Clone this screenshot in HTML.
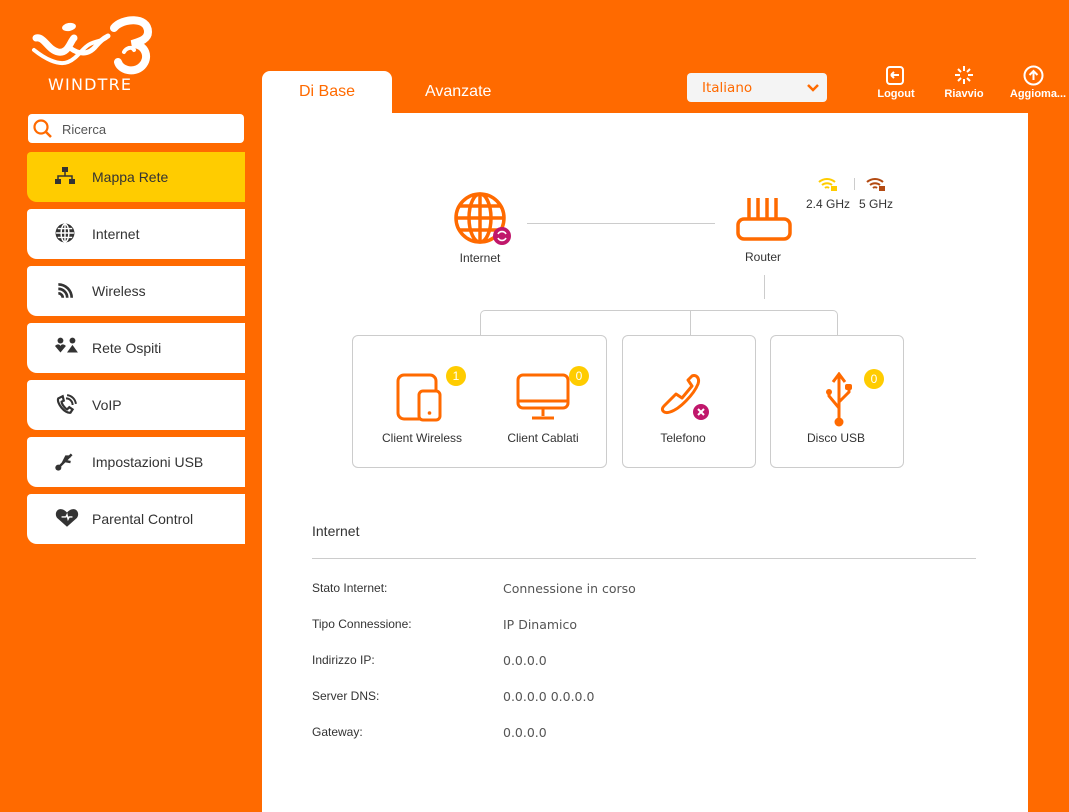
<!DOCTYPE html>
<html><head><meta charset="utf-8"><style>
*{box-sizing:border-box;margin:0;padding:0}
body{width:1069px;height:812px;background:#ff6a00;font-family:"Liberation Sans",Arial,sans-serif;position:relative;overflow:hidden}
.abs{position:absolute}
.menu{position:absolute;left:27px;width:218px;height:50px;background:#fff;border-radius:4px 0 0 10px;font-size:14px;color:#333}
.menu span{position:absolute;left:65px;top:17px}
.menu svg{position:absolute;left:28px;top:14px}
.lbl{position:absolute;font-size:12px;color:#333}
.val{position:absolute;font-family:"DejaVu Sans",Verdana,sans-serif;font-size:12.5px;color:#555}
.box{position:absolute;border:1px solid #ccc;border-radius:6px;top:335px;height:133px;background:#fff}
.badge{position:absolute;width:20px;height:20px;border-radius:10px;background:#ffcc00;color:#fff;font-size:12px;text-align:center;line-height:20px}
.cap{position:absolute;font-size:12px;color:#333;text-align:center}
.ln{position:absolute background:#ccc}
.ln{position:absolute;background:#ccc}
.tb{position:absolute;color:#fff;font-size:11px;font-weight:bold;text-align:center;width:60px}
</style></head><body>
<!-- logo -->
<svg class="abs" style="left:30px;top:16px" width="126" height="60" viewBox="0 0 126 60">
<ellipse cx="39" cy="11" rx="7" ry="4" fill="#fff" transform="rotate(-10 39 11)"/>
<path d="M6 22c8-2 12 12 22 14 10 2 12-10 16-14" stroke="#fff" stroke-width="7" fill="none" stroke-linecap="round"/>
<path d="M4 34c10 8 24 16 34 12 10-4 14-14 22-18 6-3 12-3 16-6" stroke="#fff" stroke-width="4" fill="none" stroke-linecap="round"/>
<path d="M40 32c8 6 18 8 26-2 4-5 8-8 12-10" stroke="#fff" stroke-width="5" fill="none" stroke-linecap="round"/>
<path d="M84 12c8-10 34-12 34 4 0 8-10 10-16 12 14 0 18 14 10 22-8 8-22 4-24-4" stroke="#fff" stroke-width="8" fill="none" stroke-linecap="round"/>
<path d="M94 36c2-4 8-6 10-2" stroke="#fff" stroke-width="4" fill="none" stroke-linecap="round"/>
</svg>
<div class="abs" style="left:48px;top:75px;color:#fff;font-size:16px;letter-spacing:1.2px;font-family:'DejaVu Sans',sans-serif">WINDTRE</div>
<!-- search -->
<div class="abs" style="left:28px;top:114px;width:216px;height:29px;background:#fff;border-radius:4px"></div>
<svg class="abs" style="left:33px;top:119px" width="22" height="20"><circle cx="8" cy="8" r="6.5" stroke="#ff6a00" stroke-width="2.2" fill="none"/><path d="M13 13l5 5" stroke="#ff6a00" stroke-width="2.5"/></svg>
<div class="abs" style="left:62px;top:122px;font-size:13px;color:#555">Ricerca</div>
<!-- menu -->
<div class="menu" style="top:152px;background:#ffcc00"><svg width="20" height="20" viewBox="0 0 20 18"><rect x="7" y="0" width="6" height="5" fill="#333"/><rect x="0" y="12" width="6" height="5" fill="#333"/><rect x="14" y="12" width="6" height="5" fill="#333"/><path d="M10 5v4M3 12V9h14v3" stroke="#333" stroke-width="1.5" fill="none"/></svg><span>Mappa Rete</span></div>
<div class="menu" style="top:209px"><svg width="20" height="20" viewBox="0 0 18 18"><circle cx="9" cy="9" r="8.5" fill="#333"/><path d="M1 9h16M9 1v16M2.5 5h13M2.5 13h13" stroke="#fff" stroke-width="1.3"/><ellipse cx="9" cy="9" rx="3.5" ry="8" stroke="#fff" stroke-width="1.3" fill="none"/></svg><span>Internet</span></div>
<div class="menu" style="top:266px"><svg width="20" height="20" viewBox="0 0 18 18"><path d="M3 4a12 12 0 0 1 12 12M3 8a8 8 0 0 1 8 8M3 12a4 4 0 0 1 4 4" stroke="#333" stroke-width="2.4" fill="none"/></svg><span>Wireless</span></div>
<div class="menu" style="top:323px"><svg width="24" height="18" viewBox="0 0 22 16"><circle cx="5" cy="3" r="2.7" fill="#333"/><circle cx="16" cy="3" r="2.7" fill="#333"/><path d="M0 8c2-2 4-2 5 0 1-2 3-2 5 0l-5 6z" fill="#333"/><path d="M11 14l5-7 5 7z" fill="#333"/></svg><span>Rete Ospiti</span></div>
<div class="menu" style="top:380px"><svg width="22" height="22" viewBox="0 0 20 20"><path d="M3 4c-2 4 6 14 11 13l2-3-3-2-2 2c-2-1-5-5-5-7l2-1-1-4z" stroke="#333" stroke-width="2" fill="none"/><path d="M10 4a6 6 0 0 1 6 6M11 1a9 9 0 0 1 8 8" stroke="#333" stroke-width="1.8" fill="none"/></svg><span>VoIP</span></div>
<div class="menu" style="top:437px"><svg width="20" height="20" viewBox="0 0 18 18"><path d="M3 15L15 3M7 11l3-6h4M9 9l5 1" stroke="#333" stroke-width="2.2" fill="none"/><circle cx="3" cy="15" r="2.7" fill="#333"/></svg><span>Impostazioni USB</span></div>
<div class="menu" style="top:494px"><svg width="24" height="20" viewBox="0 0 22 18"><path d="M11 17L2 9C-1 5 2 0 6 1c2 0 4 2 5 3 1-1 3-3 5-3 4-1 7 4 4 8z" fill="#333"/><path d="M6 8h4l1-2 1 4 1-2h3" stroke="#fff" stroke-width="1.3" fill="none"/></svg><span>Parental Control</span></div>
<!-- tabs -->
<div class="abs" style="left:262px;top:71px;width:130px;height:44px;background:#fff;border-radius:8px 8px 0 0"></div>
<div class="abs" style="left:299px;top:83px;color:#ff6a00;font-size:16px">Di Base</div>
<div class="abs" style="left:425px;top:83px;color:#fff;font-size:16px">Avanzate</div>
<div class="abs" style="left:687px;top:73px;width:140px;height:29px;background:#f4f4f4;border-radius:4px"></div>
<div class="abs" style="left:702px;top:80px;color:#ff6a00;font-size:13.5px;font-family:'DejaVu Sans',sans-serif">Italiano</div>
<svg class="abs" style="left:807px;top:84px" width="12" height="8"><path d="M1 1l5 5 5-5" stroke="#ff6a00" stroke-width="2.5" fill="none"/></svg>
<svg class="abs" style="left:886px;top:66px" width="20" height="20"><rect x="1" y="1" width="16" height="17" rx="3" stroke="#fff" stroke-width="2" fill="none"/><path d="M5 9h8M5 9l3-3M5 9l3 3" stroke="#fff" stroke-width="2" fill="none"/></svg>
<div class="tb" style="left:866px;top:88px">Logout</div>
<svg class="abs" style="left:954px;top:65px" width="20" height="20" viewBox="0 0 20 20"><g stroke="#fff" stroke-width="2"><path d="M10 1v5M10 14v5M1 10h5M14 10h5M4 4l3 3M13 13l3 3M16 4l-3 3M4 16l3-3"/></g></svg>
<div class="tb" style="left:934px;top:88px">Riavvio</div>
<svg class="abs" style="left:1023px;top:65px" width="21" height="21"><circle cx="10.5" cy="10.5" r="9" stroke="#fff" stroke-width="2" fill="none"/><path d="M10.5 15V6M6.5 10l4-4 4 4" stroke="#fff" stroke-width="2" fill="none"/></svg>
<div class="tb" style="left:1003px;top:88px;width:70px">Aggioma...</div>
<!-- panel -->
<div class="abs" style="left:262px;top:113px;width:766px;height:699px;background:#fff"></div>
<!-- diagram -->
<svg class="abs" style="left:452px;top:190px" width="62" height="60" viewBox="0 0 62 60"><circle cx="28" cy="28" r="24" stroke="#ff6a00" stroke-width="3.5" fill="none"/><ellipse cx="28" cy="28" rx="11" ry="24" stroke="#ff6a00" stroke-width="3.5" fill="none"/><path d="M4 28h48M8 16h40M8 40h40M28 4v48" stroke="#ff6a00" stroke-width="3.5"/><circle cx="50" cy="46" r="9" fill="#c0176b"/><path d="M46 44a4.5 4.5 0 0 1 8 0M54 48a4.5 4.5 0 0 1-8 0" stroke="#fff" stroke-width="1.6" fill="none"/></svg>
<div class="cap" style="left:450px;top:251px;width:60px">Internet</div>
<div class="ln" style="left:527px;top:223px;width:188px;height:1px"></div>
<svg class="abs" style="left:735px;top:195px" width="58" height="48" viewBox="0 0 58 48"><rect x="3" y="24" width="52" height="20" rx="6" stroke="#ff6a00" stroke-width="3.5" fill="none"/><path d="M14 24V3M23 24V3M32 24V3M41 24V3" stroke="#ff6a00" stroke-width="3.5"/></svg>
<div class="cap" style="left:733px;top:250px;width:60px">Router</div>
<svg class="abs" style="left:817px;top:176px" width="22" height="16"><path d="M2 6a12 12 0 0 1 16 0M5 9a8 8 0 0 1 10 0M8 12a3 3 0 0 1 4 0" stroke="#ffcc00" stroke-width="2" fill="none"/><rect x="14" y="10" width="6" height="5" fill="#ffcc00"/></svg>
<svg class="abs" style="left:865px;top:176px" width="22" height="16"><path d="M2 6a12 12 0 0 1 16 0M5 9a8 8 0 0 1 10 0M8 12a3 3 0 0 1 4 0" stroke="#b34a12" stroke-width="2" fill="none"/><rect x="14" y="10" width="6" height="5" fill="#b34a12"/></svg>
<div class="ln" style="left:854px;top:178px;width:1px;height:12px"></div>
<div class="cap" style="left:806px;top:197px">2.4 GHz</div>
<div class="cap" style="left:859px;top:197px">5 GHz</div>
<div class="ln" style="left:764px;top:275px;width:1px;height:24px"></div>
<div class="abs" style="left:480px;top:310px;width:358px;height:26px;border:1px solid #ccc;border-bottom:none;border-radius:5px 5px 0 0"></div>
<div class="ln" style="left:690px;top:310px;width:1px;height:26px"></div>
<div class="box" style="left:352px;width:255px"></div>
<div class="box" style="left:622px;width:134px"></div>
<div class="box" style="left:770px;width:134px"></div>
<svg class="abs" style="left:395px;top:372px" width="52" height="52"><rect x="3" y="3" width="38" height="44" rx="6" stroke="#ff6a00" stroke-width="3" fill="none"/><rect x="24" y="19" width="21" height="29" rx="4" stroke="#ff6a00" stroke-width="3" fill="#fff"/><circle cx="34.5" cy="41" r="1.8" fill="#ff6a00"/></svg>
<div class="badge" style="left:446px;top:366px">1</div>
<div class="cap" style="left:372px;top:431px;width:100px">Client Wireless</div>
<svg class="abs" style="left:515px;top:372px" width="58" height="50"><rect x="3" y="3" width="50" height="33" rx="5" stroke="#ff6a00" stroke-width="3" fill="none"/><path d="M3 29h50M28 36v8M17 46h22" stroke="#ff6a00" stroke-width="3"/></svg>
<div class="badge" style="left:569px;top:366px">0</div>
<div class="cap" style="left:493px;top:431px;width:100px">Client Cablati</div>
<svg class="abs" style="left:657px;top:370px" width="56" height="52"><path d="M7 36c-4 4 0 8 6 6 10-3 24-18 28-28 2-6-2-10-6-8l-4 4 4 6-10 12-6-4z" stroke="#ff6a00" stroke-width="3" fill="none" stroke-linejoin="round"/><circle cx="44" cy="42" r="8" fill="#c0176b"/><path d="M41 39l6 6M47 39l-6 6" stroke="#fff" stroke-width="2"/></svg>
<div class="cap" style="left:643px;top:431px;width:80px">Telefono</div>
<svg class="abs" style="left:823px;top:372px" width="32" height="58"><path d="M16 2v50M10 10l6-8 6 8M16 36L6 24v-6M16 30l10-10v-4" stroke="#ff6a00" stroke-width="3" fill="none"/><circle cx="6" cy="20" r="3" fill="#ff6a00"/><rect x="22" y="12" width="7" height="6" rx="2" fill="#ff6a00"/><circle cx="16" cy="50" r="4.5" fill="#ff6a00"/></svg>
<div class="badge" style="left:864px;top:369px">0</div>
<div class="cap" style="left:796px;top:431px;width:80px">Disco USB</div>
<!-- details -->
<div class="abs" style="left:312px;top:523px;font-size:14px;color:#333">Internet</div>
<div class="ln" style="left:312px;top:558px;width:664px;height:1px"></div>
<div class="lbl" style="left:312px;top:581px">Stato Internet:</div><div class="val" style="left:503px;top:581px">Connessione in corso</div>
<div class="lbl" style="left:312px;top:617px">Tipo Connessione:</div><div class="val" style="left:503px;top:617px">IP Dinamico</div>
<div class="lbl" style="left:312px;top:653px">Indirizzo IP:</div><div class="val" style="left:503px;top:653px">0.0.0.0</div>
<div class="lbl" style="left:312px;top:689px">Server DNS:</div><div class="val" style="left:503px;top:689px">0.0.0.0 0.0.0.0</div>
<div class="lbl" style="left:312px;top:725px">Gateway:</div><div class="val" style="left:503px;top:725px">0.0.0.0</div>
</body></html>
